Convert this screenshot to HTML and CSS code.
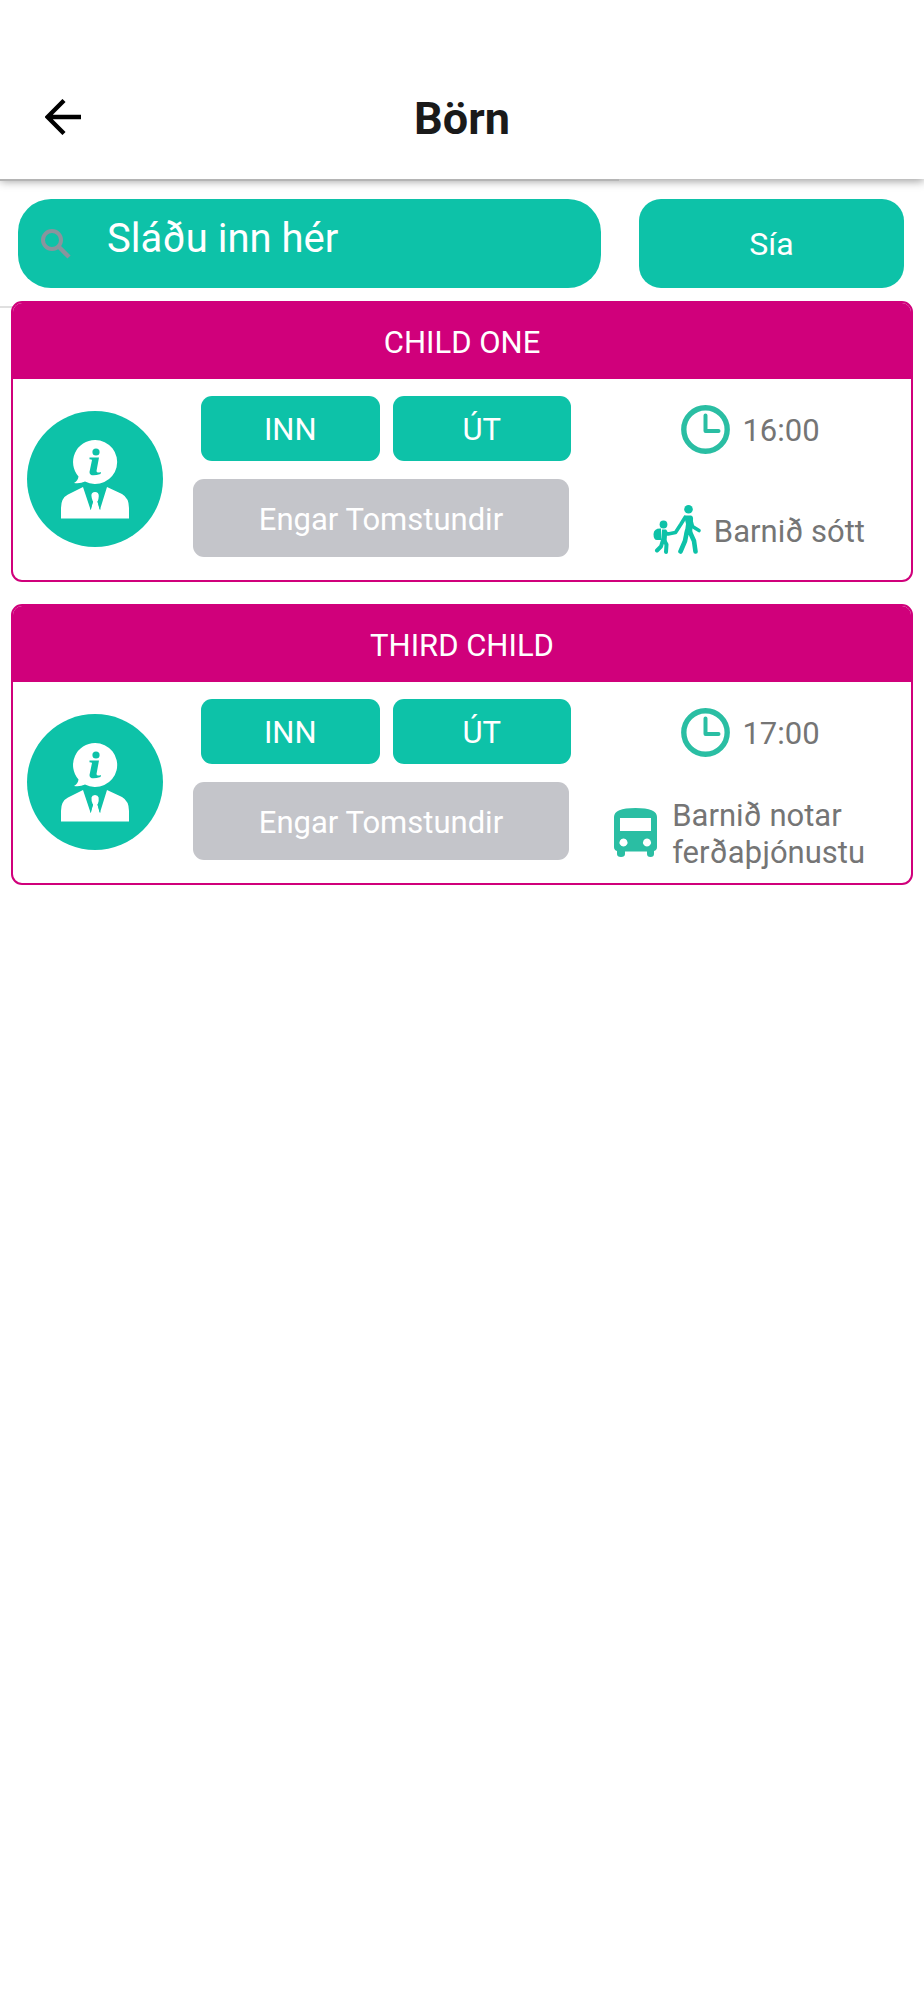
FILE: index.html
```html
<!DOCTYPE html>
<html lang="is">
<head>
<meta charset="utf-8">
<meta name="viewport" content="width=device-width, initial-scale=1">
<title>Börn</title>
<link rel="stylesheet" href="styles.css">
</head>
<body>
<svg class="sprite" aria-hidden="true">
  <symbol id="icon-person" viewBox="0 0 136 136">
    <path fill="#fff" d="M68 29a22 22 0 1 1-10 41.500q-5 2.500-11 1.500q4-2.500 4.500-6.500A22 22 0 0 1 68 29z"/>
    <circle fill="#0dc2a8" cx="69" cy="41" r="3.600"/>
    <path fill="#0dc2a8" d="M62.500 46.500H72L69.500 60q0 2.500 4.500 1l-.5 2q-11 3.500-11-2L65 49q0-.8-2.500-.8z"/>
    <path fill="#fff" d="M34 107.500V97Q34 87 41 83.500L56 76L63.500 98.500L66 91Q62 81 68 81Q74 81 70.500 91L73 98.500L80 76L95 83Q102 87 102 97V107.500z"/>
    <path fill="none" stroke="#0dc2a8" stroke-width="1" d="M65.500 90L63.500 98.500M71 90L73 98.500"/>
  </symbol>
  <symbol id="icon-clock" viewBox="0 0 49 49">
    <circle cx="24.500" cy="24.500" r="21.700" fill="none" stroke="#2abea3" stroke-width="5.400"/>
    <path d="M24.500 10.500V26H37.500" fill="none" stroke="#2abea3" stroke-width="4" stroke-linecap="round" stroke-linejoin="round"/>
  </symbol>
  <symbol id="icon-walk" viewBox="0 0 49 49">
    <g fill="none" stroke="#0dc2a8" stroke-linecap="round" stroke-linejoin="round">
      <path stroke-width="3.600" d="M32 12.500L28 19L22.500 27.500L15 29L11 27.500"/>
      <path stroke-width="3.600" d="M37.500 14L39.500 21.500L46 25.500"/>
      <path stroke-width="4.600" d="M34 26L32 36L27.500 46.500M36.500 26L41 36L42.500 46.500"/>
      <path stroke-width="4" d="M10 35L8 41.500L4 45.500M11 35L13.500 39.500L13 47"/>
    </g>
    <g fill="#0dc2a8">
      <circle cx="35.500" cy="4.300" r="4.300"/>
      <path d="M31 10.500H38Q40.500 11 40 15L39 30H31.500L33 19Z"/>
      <circle cx="10.500" cy="19.500" r="3.900"/>
      <path d="M9 24.500H13Q15 26 14 30L13.500 37H8Z"/>
      <path d="M8 23.500Q1 23 .5 29Q.5 35 4 35H8Z"/>
    </g>
  </symbol>
  <symbol id="icon-bus" viewBox="0 0 49 49">
    <path fill="#2abea3" fill-rule="evenodd" d="M3 9Q3 0 24.500 0Q46 0 46 9V39Q46 42 43 43V46Q43 49 39.500 49Q36 49 36 46V43.500H14V46Q14 49 10 49Q6 49 6 46V43Q3 42 3 39ZM9 10V23H40V10ZM12.500 30.500a4 4 0 1 0 .01 0ZM36 30.500a4 4 0 1 0 .01 0Z"/>
  </symbol>
</svg>

<header class="topbar">
  <button class="back" type="button" aria-label="Til baka">
    <svg viewBox="0 0 36 36" width="36" height="36" aria-hidden="true"><path d="M36 18H3M19 1.500L2.500 18L19 34.500" fill="none" stroke="#000" stroke-width="4.400"/></svg>
  </button>
  <h1 class="title">Börn</h1>
</header>

<main class="content">
  <form class="filters">
    <label class="search">
      <svg class="search-icon" viewBox="0 0 30 30" aria-hidden="true"><circle cx="11" cy="11" r="9" fill="none" stroke="#8a949d" stroke-width="4"/><path d="M17 17L28 28" stroke="#8a949d" stroke-width="4.400"/></svg>
      <input class="search-input" type="text" placeholder="Sláðu inn hér" aria-label="Sláðu inn hér">
    </label>
    <button class="filter-button" type="button">Sía</button>
  </form>

  <section class="list">
    <article class="card">
      <h2 class="card-title">CHILD ONE</h2>
      <div class="card-body">
        <button class="avatar" type="button" aria-label="Upplýsingar"><svg viewBox="0 0 136 136" aria-hidden="true"><use href="#icon-person"/></svg></button>
        <div class="actions">
          <div class="inout">
            <button class="check" type="button">INN</button>
            <button class="check" type="button">ÚT</button>
          </div>
          <button class="hobby" type="button">Engar Tomstundir</button>
        </div>
        <div class="status">
          <p class="time"><svg class="icon" aria-hidden="true"><use href="#icon-clock"/></svg><span>16:00</span></p>
          <p class="pickup"><svg class="icon" aria-hidden="true"><use href="#icon-walk"/></svg><span>Barnið sótt</span></p>
        </div>
      </div>
    </article>

    <article class="card">
      <h2 class="card-title">THIRD CHILD</h2>
      <div class="card-body">
        <button class="avatar" type="button" aria-label="Upplýsingar"><svg viewBox="0 0 136 136" aria-hidden="true"><use href="#icon-person"/></svg></button>
        <div class="actions">
          <div class="inout">
            <button class="check" type="button">INN</button>
            <button class="check" type="button">ÚT</button>
          </div>
          <button class="hobby" type="button">Engar Tomstundir</button>
        </div>
        <div class="status">
          <p class="time"><svg class="icon" aria-hidden="true"><use href="#icon-clock"/></svg><span>17:00</span></p>
          <p class="pickup"><svg class="icon" aria-hidden="true"><use href="#icon-bus"/></svg><span>Barnið notar<br>ferðaþjónustu</span></p>
        </div>
      </div>
    </article>
  </section>
</main>
</body>
</html>
```
FILE: styles.css
```css
* {
  box-sizing: border-box;
}

body {
  margin: 0;
  background: #fff;
  color: #757575;
  font-family: Roboto, "Liberation Sans", sans-serif;
  font-size: 31px;
  line-height: 37px;
}

button,
input {
  margin: 0;
  padding: 0;
  border: 0;
  font: inherit;
}

h1,
h2,
p {
  margin: 0;
  font-weight: 400;
}

.sprite {
  position: absolute;
  width: 0;
  height: 0;
}

.topbar {
  display: grid;
  grid-template-columns: 126px 1fr 126px;
  align-items: center;
  padding: 58px 0 3px;
  min-height: 179px;
  background: #fff;
  box-shadow: 0 2px 9px rgba(0, 0, 0, 0.4);
}

.back {
  display: flex;
  justify-content: center;
  background: none;
}

.title {
  padding-top: 4px;
  color: #1a1a1a;
  font-size: 45px;
  font-weight: 700;
  line-height: 56px;
  text-align: center;
}

.content::before {
  content: "";
  display: block;
  width: 67%;
  height: 2px;
  background: #b4b4b4;
}

.filters {
  display: grid;
  grid-template-columns: minmax(0, 583fr) minmax(0, 265fr);
  gap: 38px;
  padding: 18px 20px 13px 18px;
}

.search {
  display: flex;
  align-items: center;
  height: 89px;
  padding-left: 23px;
  border-radius: 33px;
  background: #0dc2a8;
}

.search-icon {
  flex: none;
  width: 30px;
  height: 30px;
}

.search-input {
  flex: 1;
  min-width: 0;
  height: 89px;
  padding: 0 20px 10px 36px;
  background: none;
  color: #fff;
  font-size: 40px;
  outline: 0;
}

.search-input::placeholder {
  color: #fff;
  opacity: 1;
}

.filter-button {
  padding-top: 2px;
  border-radius: 22px;
  background: #0dc2a8;
  color: #fff;
  font-size: 32px;
}

.list {
  display: grid;
  gap: 22px;
  padding: 0 11px;
  background: linear-gradient(#e0e0e0, #e0e0e0) 0 5px / 67% 2px no-repeat;
}

.card {
  overflow: hidden;
  border: 2px solid #d0007b;
  border-radius: 11px;
  background: #fff;
}

.card-title {
  padding: 21px 0 18px;
  background: #d0007b;
  color: #fff;
  font-size: 31px;
  text-align: center;
}

.card-body {
  display: grid;
  grid-template-columns: 136px 406px 1fr;
  padding-left: 14px;
}

.avatar {
  width: 136px;
  height: 136px;
  margin-top: 32px;
  border-radius: 50%;
  background: #0dc2a8;
}

.avatar svg {
  display: block;
}

.actions {
  display: grid;
  align-content: start;
  gap: 18px;
  padding: 17px 0 0 30px;
}

.inout {
  display: grid;
  grid-template-columns: 1fr 1fr;
  gap: 13px;
  margin: 0 -2px 0 8px;
}

.check,
.hobby {
  height: 65px;
  padding-top: 2px;
  border-radius: 11px;
  background: #0dc2a8;
  color: #fff;
}

.hobby {
  height: 78px;
  background: #c4c5ca;
}

.status {
  display: grid;
  grid-template-rows: 103px 98px;
  align-items: center;
  padding-left: 21px;
}

.time,
.pickup {
  display: flex;
  align-items: center;
  gap: 12px;
}

.time {
  justify-content: center;
}

.pickup {
  justify-content: flex-end;
  padding-right: 46px;
}

.icon {
  flex: none;
  width: 49px;
  height: 49px;
  margin-bottom: 3px;
}
```
